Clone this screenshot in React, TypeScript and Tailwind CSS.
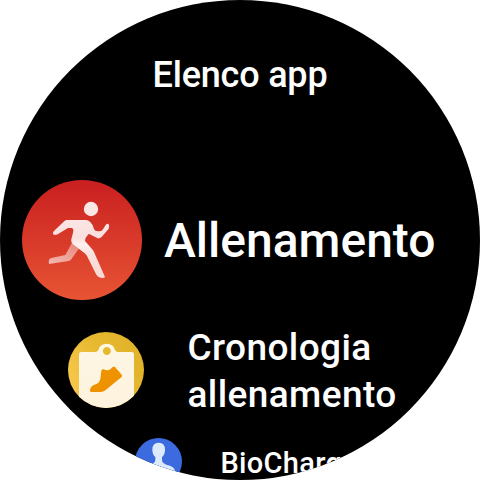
interface AppItem {
  label: string;
  icon: React.ReactNode;
  rowClass: string;
  labelClass: string;
}

function WorkoutIcon() {
  return (
    <svg viewBox="30 30 360 360" className="size-[120px] shrink-0">
      <defs>
        <linearGradient id="workout-bg" x1="0" y1="0" x2="0" y2="1">
          <stop offset="0" stopColor="#c91f20" />
          <stop offset="1" stopColor="#e75433" />
        </linearGradient>
        <linearGradient id="workout-leg" x1="1" y1="0" x2="0" y2="1">
          <stop offset="0" stopColor="#fff" stopOpacity="0.35" />
          <stop offset="0.45" stopColor="#fff" stopOpacity="0.5" />
          <stop offset="1" stopColor="#fff" stopOpacity="0.62" />
        </linearGradient>
        <linearGradient id="workout-body" x1="0" y1="0" x2="0" y2="1">
          <stop offset="0" stopColor="#fbe6e5" />
          <stop offset="0.3" stopColor="#f9dfdd" />
          <stop offset="0.42" stopColor="#fdf0ef" />
          <stop offset="0.6" stopColor="#fae0dc" />
          <stop offset="1" stopColor="#f9d8d3" />
        </linearGradient>
      </defs>
      <circle cx="210" cy="210" r="180" fill="url(#workout-bg)" />
      {/* back leg */}
      <path
        d="M180 218 L160 255 L118 264 Q111 266 110 273 L111 282 L170 273 Q176 271 179 266 L202 234 Z"
        fill="url(#workout-leg)"
      />
      <circle cx="237" cy="117" r="21.5" fill="#fbe6e6" />
      {/* torso, arms and front leg */}
      <path
        d="M164 150 H222 Q229 150 234 155 Q244 164 246 177 Q248 184 257 184 L264 184 Q269 184 273 178 L281 165 Q286 159 290 163 Q293 167 290 176 L271 199 Q265 206 257 205 L236 194 Q231 190 228 194 Q220 201 219 213 L238 235 Q243 240 246 246 L279 321 Q276 325 267 323 Q258 322 253 314 L225 258 Q223 253 217 249 L183 223 Q175 215 179 204 L183 188 Q186 178 180 174 L168 174 L137 193 Q128 198 123 192 Q121 186 129 180 L155 155 Q159 150 164 150 Z"
        fill="url(#workout-body)"
      />
    </svg>
  );
}

function HistoryIcon() {
  return (
    <svg viewBox="24 21 228 228" className="size-[76px] shrink-0">
      <defs>
        <linearGradient id="history-bg" x1="1" y1="0.2" x2="0" y2="0.7">
          <stop offset="0" stopColor="#e0b22a" />
          <stop offset="0.5" stopColor="#e6b930" />
          <stop offset="1" stopColor="#f9c84c" />
        </linearGradient>
        <linearGradient id="history-board" x1="0" y1="0" x2="0" y2="1">
          <stop offset="0" stopColor="#fef7e6" />
          <stop offset="1" stopColor="#fdf2dc" />
        </linearGradient>
        <clipPath id="history-clip">
          <circle cx="138" cy="135" r="114" />
        </clipPath>
      </defs>
      <g clipPath="url(#history-clip)">
        <rect x="24" y="21" width="228" height="228" fill="url(#history-bg)" />
        <path
          fillRule="evenodd"
          d="M64 81 H106 Q112 81 115 75 A26 26 0 0 1 165 75 Q168 81 174 81 H215 Q222 81 222 88 V249 H57 V88 Q57 81 64 81 Z M140.500 66 a12 12 0 1 0 .01 0 Z"
          fill="url(#history-board)"
        />
      </g>
      {/* shoe */}
      <path
        d="M124 137 Q126 132 131 133 Q141 138 148 134 Q154 131 158 126 Q161 123 166 127 L169 131 Q177 138 185 149 Q188 153 184 157 L136 196 Q130 201 122 201 H94 Q89 201 90 194 Q92 182 109 177 Q118 174 121 162 Z"
        fill="#ef9200"
      />
    </svg>
  );
}

function BioIcon() {
  return (
    <svg viewBox="45 39 141 141" className="size-[47px] shrink-0">
      <circle cx="115.500" cy="109.500" r="70.500" fill="#3c6be0" />
      <path
        d="M116 53 Q135 53 135 74 Q135 88 126 96 V106 Q127 115 139 119 Q163 123 165 138 V160 H66 V138 Q68 123 92 119 Q105 115 106 106 V96 Q97 88 97 74 Q97 53 116 53 Z"
        fill="#dcebfc"
      />
    </svg>
  );
}

const items: AppItem[] = [
  {
    label: "Allenamento",
    icon: <WorkoutIcon />,
    rowClass: "mt-[75px] pl-[22px] gap-[22px]",
    labelClass: "pt-[2px] text-[48px] leading-[56px]",
  },
  {
    label: "Cronologia allenamento",
    icon: <HistoryIcon />,
    rowClass: "mt-[23px] h-[94px] pl-[68px] gap-[43.5px]",
    labelClass: "w-[230px] pt-[2px] text-[37px] leading-[47px] tracking-[0.4px]",
  },
  {
    label: "BioCharge",
    icon: <BioIcon />,
    rowClass: "mt-[21px] pl-[135px] gap-[38.5px]",
    labelClass: "pt-[2px] text-[29px] leading-[34px] tracking-[0.3px]",
  },
];

export default function App() {
  return (
    <div className="size-[480px] overflow-hidden bg-white">
      {/* round watch face */}
      <div className="size-[480px] overflow-hidden rounded-full bg-black pt-[45px] font-['Roboto',sans-serif] font-medium text-white">
        <h1 className="h-[60px] text-center text-[36px] leading-[60px] font-medium tracking-[-0.2px]">
          Elenco app
        </h1>
        {items.map((item) => (
          <div
            key={item.label}
            className={`flex items-center ${item.rowClass}`}
          >
            {item.icon}
            <span className={item.labelClass}>{item.label}</span>
          </div>
        ))}
      </div>
    </div>
  );
}
